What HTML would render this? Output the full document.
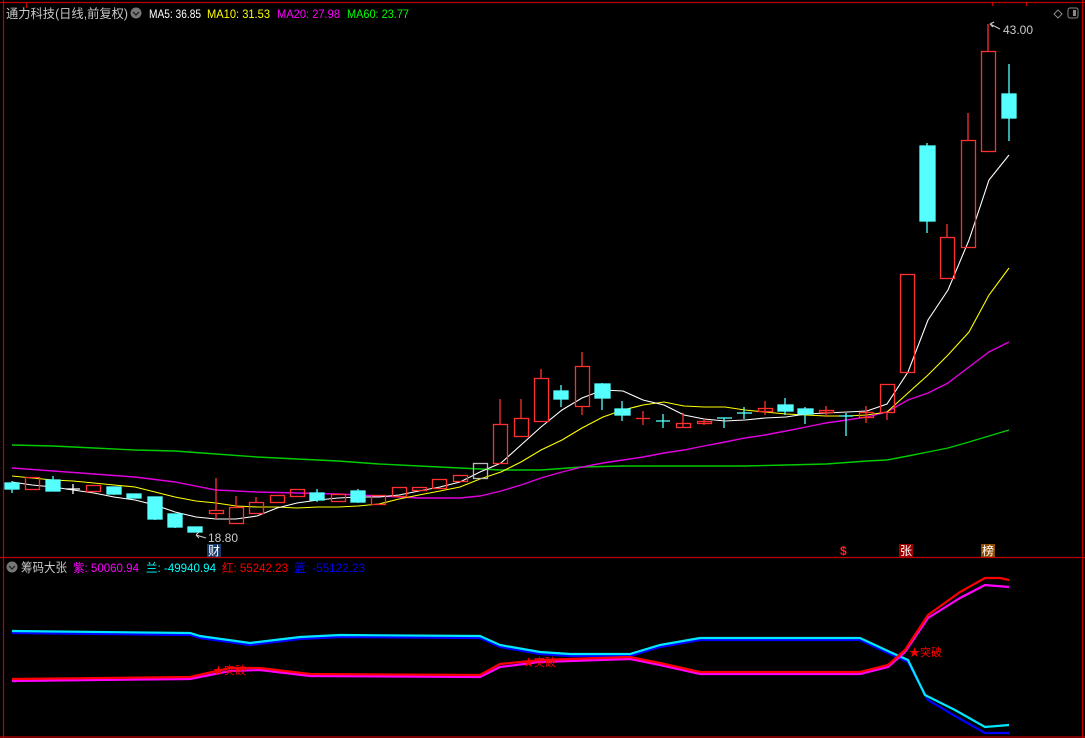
<!DOCTYPE html>
<html><head><meta charset="utf-8"><style>
body{margin:0;background:#000;width:1085px;height:738px;overflow:hidden;font-family:"Liberation Sans","Noto Sans CJK SC",sans-serif}
svg{display:block}
</style></head><body>
<svg width="1085" height="738" xmlns="http://www.w3.org/2000/svg" font-family="Liberation Sans, Noto Sans CJK SC, sans-serif">
<rect width="1085" height="738" fill="#000"/>
<g stroke="#c00000" stroke-width="1.2" fill="none">
<line x1="0" y1="2.5" x2="1085" y2="2.5"/>
<line x1="3.5" y1="0" x2="3.5" y2="738"/>
<line x1="1082.5" y1="0" x2="1082.5" y2="738"/>
<line x1="0" y1="557.5" x2="1085" y2="557.5"/>
<line x1="0" y1="737" x2="1085" y2="737"/>
<line x1="26.5" y1="2" x2="26.5" y2="8"/>
<line x1="992.5" y1="2" x2="992.5" y2="6"/>
<line x1="1026.5" y1="2" x2="1026.5" y2="6"/>
</g>
<!-- header -->
<circle cx="136" cy="13" r="5.5" fill="#777"/>
<path d="M133 12 L136 15 L139 12" stroke="#222" stroke-width="1.3" fill="none"/>
<text x="6" y="18" font-size="12.5" fill="#c8c8c8" textLength="122" lengthAdjust="spacingAndGlyphs">通力科技(日线,前复权)</text>
<text x="149" y="18" font-size="12" fill="#fff" textLength="52" lengthAdjust="spacingAndGlyphs">MA5: 36.85</text>
<text x="207" y="18" font-size="12" fill="#ff0" textLength="63" lengthAdjust="spacingAndGlyphs">MA10: 31.53</text>
<text x="277" y="18" font-size="12" fill="#f0f" textLength="63" lengthAdjust="spacingAndGlyphs">MA20: 27.98</text>
<text x="347" y="18" font-size="12" fill="#0f0" textLength="62" lengthAdjust="spacingAndGlyphs">MA60: 23.77</text>
<path d="M1054 14 L1058 10 L1062 14 L1058 18 Z" stroke="#888" fill="none"/>
<rect x="1068" y="8" width="10" height="10" rx="2" stroke="#888" fill="none"/><rect x="1073" y="10" width="3" height="6" fill="#888"/>
<!-- MA lines -->
<g fill="none" stroke-width="1.1">
<polyline stroke="#0c0" stroke-width="1.4" points="12,445 53,446 94,448 135,450 175,451 216,454 257,457 297,459 338,461 379,464 419,466 460,468 501,470 541,470 582,467 623,466 664,466 704,466 745,466 786,465 826,464 867,461 887,460 908,456 928,452 948,448 969,442 989,436 1009,430"/>
<polyline stroke="#e000e0" stroke-width="1.4" points="12,468 53,471 94,474 135,477 175,482 216,490 257,492 297,493 338,494 379,496 419,498 460,498 480,496 501,491 521,485 541,478 562,472 582,467 603,463 623,460 643,457 664,453 684,450 704,446 725,442 745,438 765,435 786,431 806,427 826,423 847,420 867,417 887,412 908,400 928,393 948,383 969,367 989,352 1009,342"/>
<polyline stroke="#ff0" points="12,476 32,478 53,480 73,481 94,483 114,485 135,487 155,492 175,497 196,501 216,503 236,506 257,507 277,507 297,508 318,507 338,507 358,506 379,504 399,499 419,495 440,491 460,487 480,479 501,472 521,462 541,450 562,440 582,428 603,417 623,410 643,405 664,402 684,406 704,407 725,407 745,410 765,412 786,414 806,415 826,416 847,416 867,415 887,412 908,393 928,375 948,355 969,332 989,295 1009,268"/>
<polyline stroke="#fff" points="12,482 32,485 53,487 73,490 94,493 114,497 135,500 155,505 175,512 196,517 216,519 236,519 257,516 277,508 297,503 318,500 338,498 358,497 379,497 399,495 419,491 440,487 460,482 480,472 501,463 521,445 541,427 562,410 582,398 603,390 623,391 643,400 664,405 684,415 704,419 725,421 745,420 765,418 786,417 806,414 826,413 847,412 867,411 887,404 908,372 928,320 948,290 969,240 989,180 1009,155"/>
</g>
<!-- candles -->
<g stroke-width="1.3">
<g stroke="#55ffff" fill="#55ffff">
<line x1="12" y1="481" x2="12" y2="493"/><rect x="5" y="483" width="14" height="6"/>
<line x1="53" y1="476" x2="53" y2="491"/><rect x="46" y="480" width="14" height="11"/>
<line x1="114" y1="487" x2="114" y2="495"/><rect x="107" y="487" width="14" height="7"/>
<rect x="127" y="494" width="14" height="4"/>
<line x1="155" y1="497" x2="155" y2="520"/><rect x="148" y="497" width="14" height="22"/>
<line x1="175" y1="514" x2="175" y2="528"/><rect x="168" y="514" width="14" height="13"/>
<rect x="188" y="527" width="14" height="5"/>
<line x1="317" y1="489" x2="317" y2="502"/><rect x="310" y="493" width="14" height="7"/>
<line x1="358" y1="489" x2="358" y2="503"/><rect x="351" y="491" width="14" height="11"/>
<line x1="561" y1="385" x2="561" y2="407"/><rect x="554" y="391" width="14" height="8"/>
<line x1="602" y1="383" x2="602" y2="410"/><rect x="595" y="384" width="15" height="14"/>
<line x1="622" y1="401" x2="622" y2="421"/><rect x="615" y="409" width="15" height="6"/>
<line x1="663" y1="414" x2="663" y2="428"/><line x1="656" y1="421" x2="670" y2="421"/>
<line x1="724" y1="418" x2="724" y2="428"/><line x1="717" y1="418" x2="732" y2="418"/>
<line x1="744" y1="407" x2="744" y2="419"/><line x1="737" y1="413" x2="752" y2="413"/>
<line x1="785" y1="398" x2="785" y2="415"/><rect x="778" y="405" width="15" height="6"/>
<line x1="805" y1="407" x2="805" y2="424"/><rect x="798" y="409" width="15" height="5"/>
<line x1="846" y1="413" x2="846" y2="436"/><line x1="839" y1="416" x2="853" y2="416"/>
<line x1="927" y1="143" x2="927" y2="233"/><rect x="920" y="146" width="15" height="75"/>
<line x1="1009" y1="64" x2="1009" y2="141"/><rect x="1002" y="94" width="14" height="24"/>
</g>
<g stroke="#fff"><line x1="73" y1="484" x2="73" y2="494"/><line x1="66" y1="489" x2="80" y2="489"/></g>
<g stroke="#ff3030" fill="none">
<rect x="25.5" y="477.5" width="14" height="12"/>
<rect x="86.5" y="485.5" width="14" height="6"/>
<line x1="216" y1="478" x2="216" y2="519"/><rect x="209.5" y="510.5" width="14" height="3" fill="#000"/>
<line x1="236" y1="496" x2="236" y2="507"/><rect x="229.5" y="507.5" width="14" height="16"/>
<line x1="256" y1="497" x2="256" y2="502"/><rect x="249.5" y="502.5" width="14" height="11"/>
<rect x="270.5" y="495.5" width="14" height="7"/>
<rect x="290.5" y="489.5" width="14" height="7"/>
<rect x="331.5" y="494.5" width="14" height="7"/>
<rect x="371.5" y="495.5" width="14" height="9"/>
<rect x="392.5" y="487.5" width="14" height="9"/>
<rect x="412.5" y="487.5" width="14" height="3"/>
<rect x="432.5" y="479.5" width="14" height="9"/>
<rect x="453.5" y="475.5" width="14" height="6"/>
<rect x="473.5" y="463.5" width="14" height="15" stroke="#bbb"/>
<line x1="500" y1="399" x2="500" y2="424"/><rect x="493.5" y="424.5" width="14" height="39"/>
<line x1="521" y1="399" x2="521" y2="418"/><rect x="514.5" y="418.5" width="14" height="18"/>
<line x1="541" y1="369" x2="541" y2="378"/><rect x="534.5" y="378.5" width="14" height="43"/>
<line x1="582" y1="352" x2="582" y2="366"/><line x1="582" y1="406" x2="582" y2="415"/><rect x="575.5" y="366.5" width="14" height="40"/>
<line x1="643" y1="411" x2="643" y2="425"/><line x1="636" y1="418.5" x2="650" y2="418.5"/>
<line x1="683" y1="413" x2="683" y2="428"/><rect x="676.5" y="423.5" width="14" height="4"/>
<line x1="704" y1="419" x2="704" y2="425"/><rect x="697.5" y="421.5" width="14" height="2"/>
<line x1="765" y1="401" x2="765" y2="415"/><rect x="758.5" y="408.5" width="14" height="3"/>
<line x1="826" y1="406" x2="826" y2="417"/><rect x="819.5" y="410.5" width="14" height="2"/>
<line x1="866" y1="406" x2="866" y2="423"/><rect x="859.5" y="412.5" width="14" height="5"/>
<line x1="887" y1="412" x2="887" y2="420"/><rect x="880.5" y="384.5" width="14" height="28"/>
<rect x="900.5" y="274.5" width="14" height="98"/>
<line x1="947" y1="224" x2="947" y2="237"/><rect x="940.5" y="237.5" width="14" height="41"/>
<line x1="968" y1="113" x2="968" y2="140"/><rect x="961.5" y="140.5" width="14" height="107"/>
<line x1="988" y1="24" x2="988" y2="51"/><rect x="981.5" y="51.5" width="14" height="100"/>
</g>
</g>
<path d="M990 24 L1000 29" stroke="#ccc" fill="none"/><path d="M990 24 l4 -2 M990 24 l3 3" stroke="#ccc"/>
<text x="1003" y="34" font-size="12" fill="#ccc">43.00</text>
<path d="M196 535 L206 538 M196 535 l3 -3 M196 535 l3 3" stroke="#ccc" fill="none"/>
<text x="208" y="542" font-size="12" fill="#ccc">18.80</text>
<rect x="207" y="544" width="14" height="13" fill="#1a3a6a"/><text x="208" y="555" font-size="12" fill="#fff">财</text>
<text x="840" y="555" font-size="12" fill="#f22" font-weight="bold">$</text>
<rect x="899" y="544" width="14" height="13" fill="#900"/><text x="900" y="555" font-size="12" fill="#fff">张</text>
<rect x="981" y="544" width="14" height="13" fill="#8b4a00"/><text x="982" y="555" font-size="12" fill="#fff">榜</text>
<!-- lower panel header -->
<circle cx="12" cy="567" r="5.5" fill="#777"/>
<path d="M9 566 L12 569 L15 566" stroke="#222" stroke-width="1.3" fill="none"/>
<text x="21" y="572" font-size="12.5" fill="#c8c8c8" textLength="46" lengthAdjust="spacingAndGlyphs">筹码大张</text>
<text x="73" y="572" font-size="12" fill="#f0f" textLength="66" lengthAdjust="spacingAndGlyphs">紫: 50060.94</text>
<text x="146" y="572" font-size="12" fill="#0ff" textLength="70" lengthAdjust="spacingAndGlyphs">兰: -49940.94</text>
<text x="222" y="572" font-size="12" fill="#f00" textLength="66" lengthAdjust="spacingAndGlyphs">红: 55242.23</text>
<text x="294" y="572" font-size="12" fill="#00f" textLength="71" lengthAdjust="spacingAndGlyphs">蓝: -55122.23</text>
<!-- lower lines -->
<g fill="none" stroke-width="2.2">
<polyline stroke="#0000ff" points="12,633 190,635 200,638 250,645 300,639 340,637 480,638 500,647 540,654 570,656 630,656 660,647 700,640 860,640 890,654 908,662 928,700 955,716 985,733 1009,733"/>
<polyline stroke="#00e8ff" points="12,631 190,633 200,636 250,643 300,637 340,635 480,636 500,645 540,652 570,654 630,654 660,645 700,638 860,638 890,652 908,660 925,695 955,710 985,727 1009,725"/>
<polyline stroke="#ff00ff" points="12,681 190,679 230,671 260,670 310,676 480,677 500,667 540,662 630,659 660,665 700,674 860,674 888,667 905,652 928,618 960,598 985,585 1009,587"/>
<polyline stroke="#ff0000" points="12,679 190,677 230,668 260,668 310,674 480,675 500,664 540,660 630,657 660,663 700,672 860,672 888,665 905,650 928,615 960,592 985,578 1000,578 1009,580"/>
</g>
<text x="213" y="674" font-size="11" fill="#f00">★突破</text>
<text x="523" y="666" font-size="11" fill="#f00">★突破</text>
<text x="909" y="656" font-size="11" fill="#f00">★突破</text>
</svg>
</body></html>
